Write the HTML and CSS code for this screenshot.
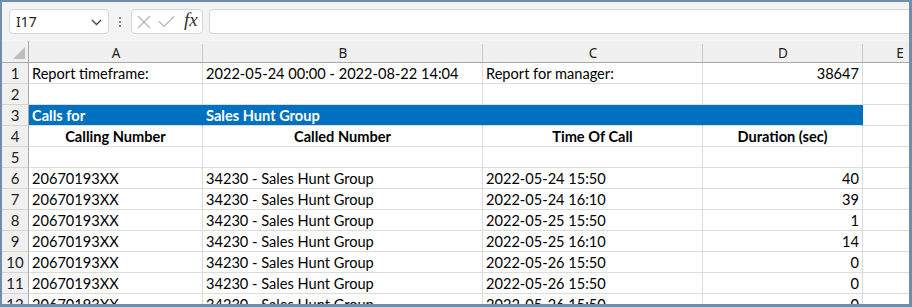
FILE: index.html
```html
<!DOCTYPE html>
<html lang="en">
<head>
    <meta charset="UTF-8">
    <title>Calls report</title>
    <link rel="stylesheet" href="styles.css">
</head>
<body>
    <div class="window">
        <div class="toolbar">
            <div class="name-box">
                <span>I17</span>
                <svg class="chevron" width="11" height="7" viewBox="0 0 11 7"><path d="M1 1 L5.5 5.5 L10 1" fill="none" stroke="#444" stroke-width="1.3"/></svg>
            </div>
            <div class="grip"><i></i><i></i><i></i></div>
            <div class="fx-box">
                <svg width="14" height="14" viewBox="0 0 14 14"><path d="M1 1 L13 13 M13 1 L1 13" stroke="#b4b4b4" stroke-width="1.2" fill="none"/></svg>
                <svg width="17" height="13" viewBox="0 0 17 13"><path d="M1 6.5 L6 11.5 L16 1.5" stroke="#b4b4b4" stroke-width="1.2" fill="none"/></svg>
                <span class="fx">fx</span>
            </div>
            <div class="formula"></div>
        </div>

        <div class="sheet">
            <div class="corner"><span class="tri"></span></div>
            <div class="colhead">A</div>
            <div class="colhead">B</div>
            <div class="colhead">C</div>
            <div class="colhead">D</div>
            <div class="colhead">E</div>

            <div class="rowhead">1</div>
            <div class="cell">Report timeframe:</div>
            <div class="cell">2022-05-24 00:00 - 2022-08-22 14:04</div>
            <div class="cell">Report for manager:</div>
            <div class="cell num">38647</div>
            <div class="cell"></div>

            <div class="rowhead">2</div>
            <div class="cell"></div><div class="cell"></div><div class="cell"></div><div class="cell"></div><div class="cell"></div>

            <div class="rowhead">3</div>
            <div class="cell band">Calls for</div>
            <div class="cell band">Sales Hunt Group</div>
            <div class="cell band"></div>
            <div class="cell band"></div>
            <div class="cell"></div>

            <div class="rowhead">4</div>
            <div class="cell head">Calling Number</div>
            <div class="cell head">Called Number</div>
            <div class="cell head">Time Of Call</div>
            <div class="cell head">Duration (sec)</div>
            <div class="cell"></div>

            <div class="rowhead">5</div>
            <div class="cell"></div><div class="cell"></div><div class="cell"></div><div class="cell"></div><div class="cell"></div>

            <div class="rowhead">6</div>
            <div class="cell">20670193XX</div><div class="cell">34230 - Sales Hunt Group</div><div class="cell">2022-05-24 15:50</div><div class="cell num">40</div><div class="cell"></div>
            <div class="rowhead">7</div>
            <div class="cell">20670193XX</div><div class="cell">34230 - Sales Hunt Group</div><div class="cell">2022-05-24 16:10</div><div class="cell num">39</div><div class="cell"></div>
            <div class="rowhead">8</div>
            <div class="cell">20670193XX</div><div class="cell">34230 - Sales Hunt Group</div><div class="cell">2022-05-25 15:50</div><div class="cell num">1</div><div class="cell"></div>
            <div class="rowhead">9</div>
            <div class="cell">20670193XX</div><div class="cell">34230 - Sales Hunt Group</div><div class="cell">2022-05-25 16:10</div><div class="cell num">14</div><div class="cell"></div>
            <div class="rowhead">10</div>
            <div class="cell">20670193XX</div><div class="cell">34230 - Sales Hunt Group</div><div class="cell">2022-05-26 15:50</div><div class="cell num">0</div><div class="cell"></div>
            <div class="rowhead">11</div>
            <div class="cell">20670193XX</div><div class="cell">34230 - Sales Hunt Group</div><div class="cell">2022-05-26 15:50</div><div class="cell num">0</div><div class="cell"></div>
            <div class="rowhead">12</div>
            <div class="cell">20670193XX</div><div class="cell">34230 - Sales Hunt Group</div><div class="cell">2022-05-26 15:50</div><div class="cell num">0</div><div class="cell"></div>
        </div>
    </div>
</body>
</html>
```

FILE: styles.css
```css
body {
    margin: 0;
    background-color: #ffffff;
}

.window {
    box-sizing: border-box;
    width: 912px;
    height: 307px;
    border: 2px solid #6f8eab;
    border-right-width: 3px;
    border-bottom-width: 3px;
    overflow: hidden;
    background-color: #ffffff;
}

.toolbar {
    display: flex;
    align-items: center;
    height: 39px;
    padding-left: 7px;
    background-color: #f3f3f3;
    box-sizing: border-box;
}

.name-box,
.fx-box,
.formula {
    box-sizing: border-box;
    height: 25px;
    background-color: #ffffff;
    border: 1px solid #d6d6d6;
    border-radius: 4px;
}

.name-box {
    width: 100px;
    display: flex;
    align-items: center;
    justify-content: space-between;
    padding: 0 6px 0 6px;
    font-family: "Noto Sans", sans-serif;
    font-size: 14px;
    color: #222;
}

.chevron {
    margin-top: 1px;
}

.grip {
    width: 22px;
    display: flex;
    flex-direction: column;
    align-items: center;
    gap: 2px;
}

.grip i {
    width: 2px;
    height: 2px;
    background-color: #8a8a8a;
}

.fx-box {
    width: 72px;
    display: flex;
    align-items: center;
    gap: 7px;
    padding-left: 5px;
}

.fx {
    font-family: "Liberation Serif", serif;
    font-style: italic;
    font-size: 19px;
    color: #333;
    margin-left: 2px;
    margin-top: -3px;
}

.formula {
    flex: 1;
    margin-left: 6px;
    border-right: none;
    border-radius: 4px 0 0 4px;
}

.sheet {
    display: grid;
    grid-template-columns: 27px 174px 280px 220px 160px 74px;
    grid-template-rows: 22px;
    grid-auto-rows: 21px;
    font-family: Lato, sans-serif;
    font-size: 14.6px;
    color: #000;
}

.corner,
.colhead {
    background-color: #f0f0f0;
    border-bottom: 1px solid #a8a8a8;
    box-sizing: border-box;
}

.corner {
    position: relative;
    border-right: 1px solid #a8a8a8;
}

.tri {
    position: absolute;
    right: 3px;
    bottom: 3px;
    width: 0;
    height: 0;
    border-left: 12px solid transparent;
    border-bottom: 12px solid #bdbdbd;
}

.colhead {
    display: flex;
    align-items: center;
    justify-content: center;
    font-family: "Noto Sans", sans-serif;
    font-size: 13.5px;
    color: #222;
    padding-top: 2px;
    background-image: linear-gradient(#c8c8c8, #c8c8c8);
    background-size: 1px 18px;
    background-position: right bottom;
    background-repeat: no-repeat;
}

.rowhead {
    background-color: #f0f0f0;
    border-right: 1px solid #a8a8a8;
    border-bottom: 1px solid #d4d4d4;
    box-sizing: border-box;
    text-align: center;
    line-height: 21px;
    font-size: 15px;
    color: #222;
}

.cell {
    box-sizing: border-box;
    border-right: 1px solid #dcdcdc;
    border-bottom: 1px solid #dcdcdc;
    padding: 0 3px;
    line-height: 21px;
    white-space: nowrap;
    overflow: hidden;
}

.num {
    text-align: right;
}

.head {
    font-weight: bold;
    text-align: center;
}

.band {
    background-color: #0070c0;
    border-right-color: #0070c0;
    color: #ffffff;
    font-weight: bold;
}
```
